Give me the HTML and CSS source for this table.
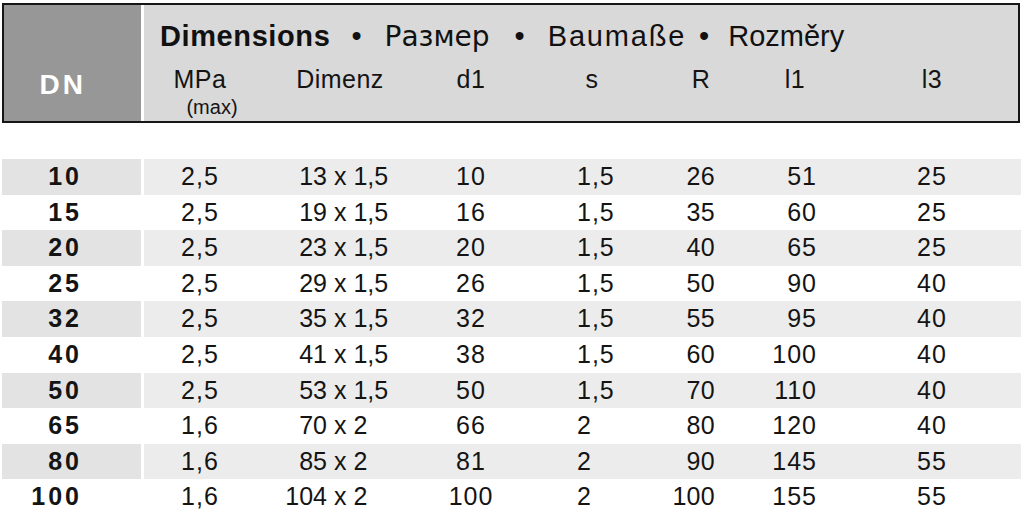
FILE: index.html
```html
<!DOCTYPE html>
<html>
<head>
<meta charset="utf-8">
<link rel="stylesheet" href="styles.css">
</head>
<body>
<div class="page">
  <div class="head">
    <div class="head-dn">DN</div>
    <div class="head-main">
      <div class="title"><b>Dimensions</b><span class="dot d1">•</span><span class="ru">Размер</span><span class="dot d2">•</span><span class="de">Baumaße</span><span class="dot d3">•</span><span class="cz">Rozměry</span></div>
      <div class="cols labels">
        <div class="c">MPa<span class="sub">(max)</span></div>
        <div class="c">Dimenz</div>
        <div class="c">d1</div>
        <div class="c">s</div>
        <div class="c">R</div>
        <div class="c">l1</div>
        <div class="c">l3</div>
      </div>
    </div>
  </div>

  <div class="body">
    <div class="row alt"><div class="dn">10</div><div class="cols"><div class="c">2,5</div><div class="d"><span class="dl">13</span> x 1,5</div><div class="c">10</div><div class="s">1,5</div><div class="r">26</div><div class="l1">51</div><div class="c">25</div></div></div>
    <div class="row"><div class="dn">15</div><div class="cols"><div class="c">2,5</div><div class="d"><span class="dl">19</span> x 1,5</div><div class="c">16</div><div class="s">1,5</div><div class="r">35</div><div class="l1">60</div><div class="c">25</div></div></div>
    <div class="row alt"><div class="dn">20</div><div class="cols"><div class="c">2,5</div><div class="d"><span class="dl">23</span> x 1,5</div><div class="c">20</div><div class="s">1,5</div><div class="r">40</div><div class="l1">65</div><div class="c">25</div></div></div>
    <div class="row"><div class="dn">25</div><div class="cols"><div class="c">2,5</div><div class="d"><span class="dl">29</span> x 1,5</div><div class="c">26</div><div class="s">1,5</div><div class="r">50</div><div class="l1">90</div><div class="c">40</div></div></div>
    <div class="row alt"><div class="dn">32</div><div class="cols"><div class="c">2,5</div><div class="d"><span class="dl">35</span> x 1,5</div><div class="c">32</div><div class="s">1,5</div><div class="r">55</div><div class="l1">95</div><div class="c">40</div></div></div>
    <div class="row"><div class="dn">40</div><div class="cols"><div class="c">2,5</div><div class="d"><span class="dl">41</span> x 1,5</div><div class="c">38</div><div class="s">1,5</div><div class="r">60</div><div class="l1">100</div><div class="c">40</div></div></div>
    <div class="row alt"><div class="dn">50</div><div class="cols"><div class="c">2,5</div><div class="d"><span class="dl">53</span> x 1,5</div><div class="c">50</div><div class="s">1,5</div><div class="r">70</div><div class="l1">110</div><div class="c">40</div></div></div>
    <div class="row"><div class="dn">65</div><div class="cols"><div class="c">1,6</div><div class="d"><span class="dl">70</span> x 2</div><div class="c">66</div><div class="s">2</div><div class="r">80</div><div class="l1">120</div><div class="c">40</div></div></div>
    <div class="row alt"><div class="dn">80</div><div class="cols"><div class="c">1,6</div><div class="d"><span class="dl">85</span> x 2</div><div class="c">81</div><div class="s">2</div><div class="r">90</div><div class="l1">145</div><div class="c">55</div></div></div>
    <div class="row"><div class="dn">100</div><div class="cols"><div class="c">1,6</div><div class="d"><span class="dl">104</span> x 2</div><div class="c">100</div><div class="s">2</div><div class="r">100</div><div class="l1">155</div><div class="c">55</div></div></div>
  </div>
</div>
</body>
</html>
```
FILE: styles.css
```css
html, body {
  margin: 0;
  padding: 0;
  background: #ffffff;
}
body {
  font-family: "Liberation Sans", Arial, sans-serif;
  color: #141414;
}
.page {
  padding: 3px 0 0 2px;
  width: 1022px;
  box-sizing: border-box;
}
.head {
  width: 1018px;
  height: 120px;
  box-sizing: border-box;
  border: 2px solid #161616;
  background: #ffffff;
  display: flex;
  gap: 3px;
}
.head-dn {
  width: 137px;
  background: #979797;
  color: #ffffff;
  font-weight: bold;
  font-size: 28px;
  letter-spacing: 3px;
  line-height: 32px;
  padding-top: 64px;
  padding-right: 55px;
  box-sizing: border-box;
  text-align: right;
}
.head-main {
  flex: 1;
  background: #d9d9d9;
  padding-top: 14px;
}
.title {
  font-size: 29px;
  line-height: 34px;
  padding-left: 16px;
  white-space: nowrap;
  letter-spacing: 1px;
  color: #111111;
}
.title b {
  letter-spacing: 0.6px;
}
.title .ru {
  font-family: "DejaVu Sans", sans-serif;
  font-size: 28px;
  letter-spacing: 0;
}
.title .de {
  letter-spacing: 1.8px;
}
.title .cz {
  letter-spacing: 0;
}
.title .dot {
  display: inline-block;
  text-align: center;
}
.title .d1 {
  margin: 0 22px 0 21px;
}
.title .d2 {
  margin: 0 22px 0 25px;
}
.title .d3 {
  margin: 0 18px 0 13px;
}
.cols {
  display: grid;
  grid-template-columns: 112px 168px 94px 148px 70px 118px 156px 1fr;
}
.labels {
  margin-top: 10px;
  font-size: 25px;
  line-height: 30px;
  letter-spacing: 0.5px;
}
.labels .sub {
  display: block;
  font-size: 20px;
  line-height: 22px;
  padding-left: 24px;
  margin-top: 2px;
  letter-spacing: 0;
}
.c {
  text-align: center;
}
.body {
  margin-top: 36px;
  width: 1019px;
}
.row {
  display: flex;
  gap: 3px;
  height: 35.6px;
  font-size: 25px;
  line-height: 35.6px;
  letter-spacing: 1px;
}
.row .dn {
  width: 139px;
  box-sizing: border-box;
  text-align: right;
  padding-right: 59px;
  font-weight: bold;
  letter-spacing: 3px;
}
.row .cols {
  flex: 1;
}
.row.alt .dn {
  background: #e3e3e3;
}
.row.alt .cols {
  background: #ececec;
}
.d {
  white-space: nowrap;
  letter-spacing: 0;
}
.dl {
  display: inline-block;
  width: 71px;
  text-align: right;
}
.s {
  padding-left: 59px;
}
.r {
  text-align: right;
  padding-right: 21px;
  letter-spacing: 0.3px;
}
.l1 {
  text-align: right;
  padding-right: 37px;
}
```
